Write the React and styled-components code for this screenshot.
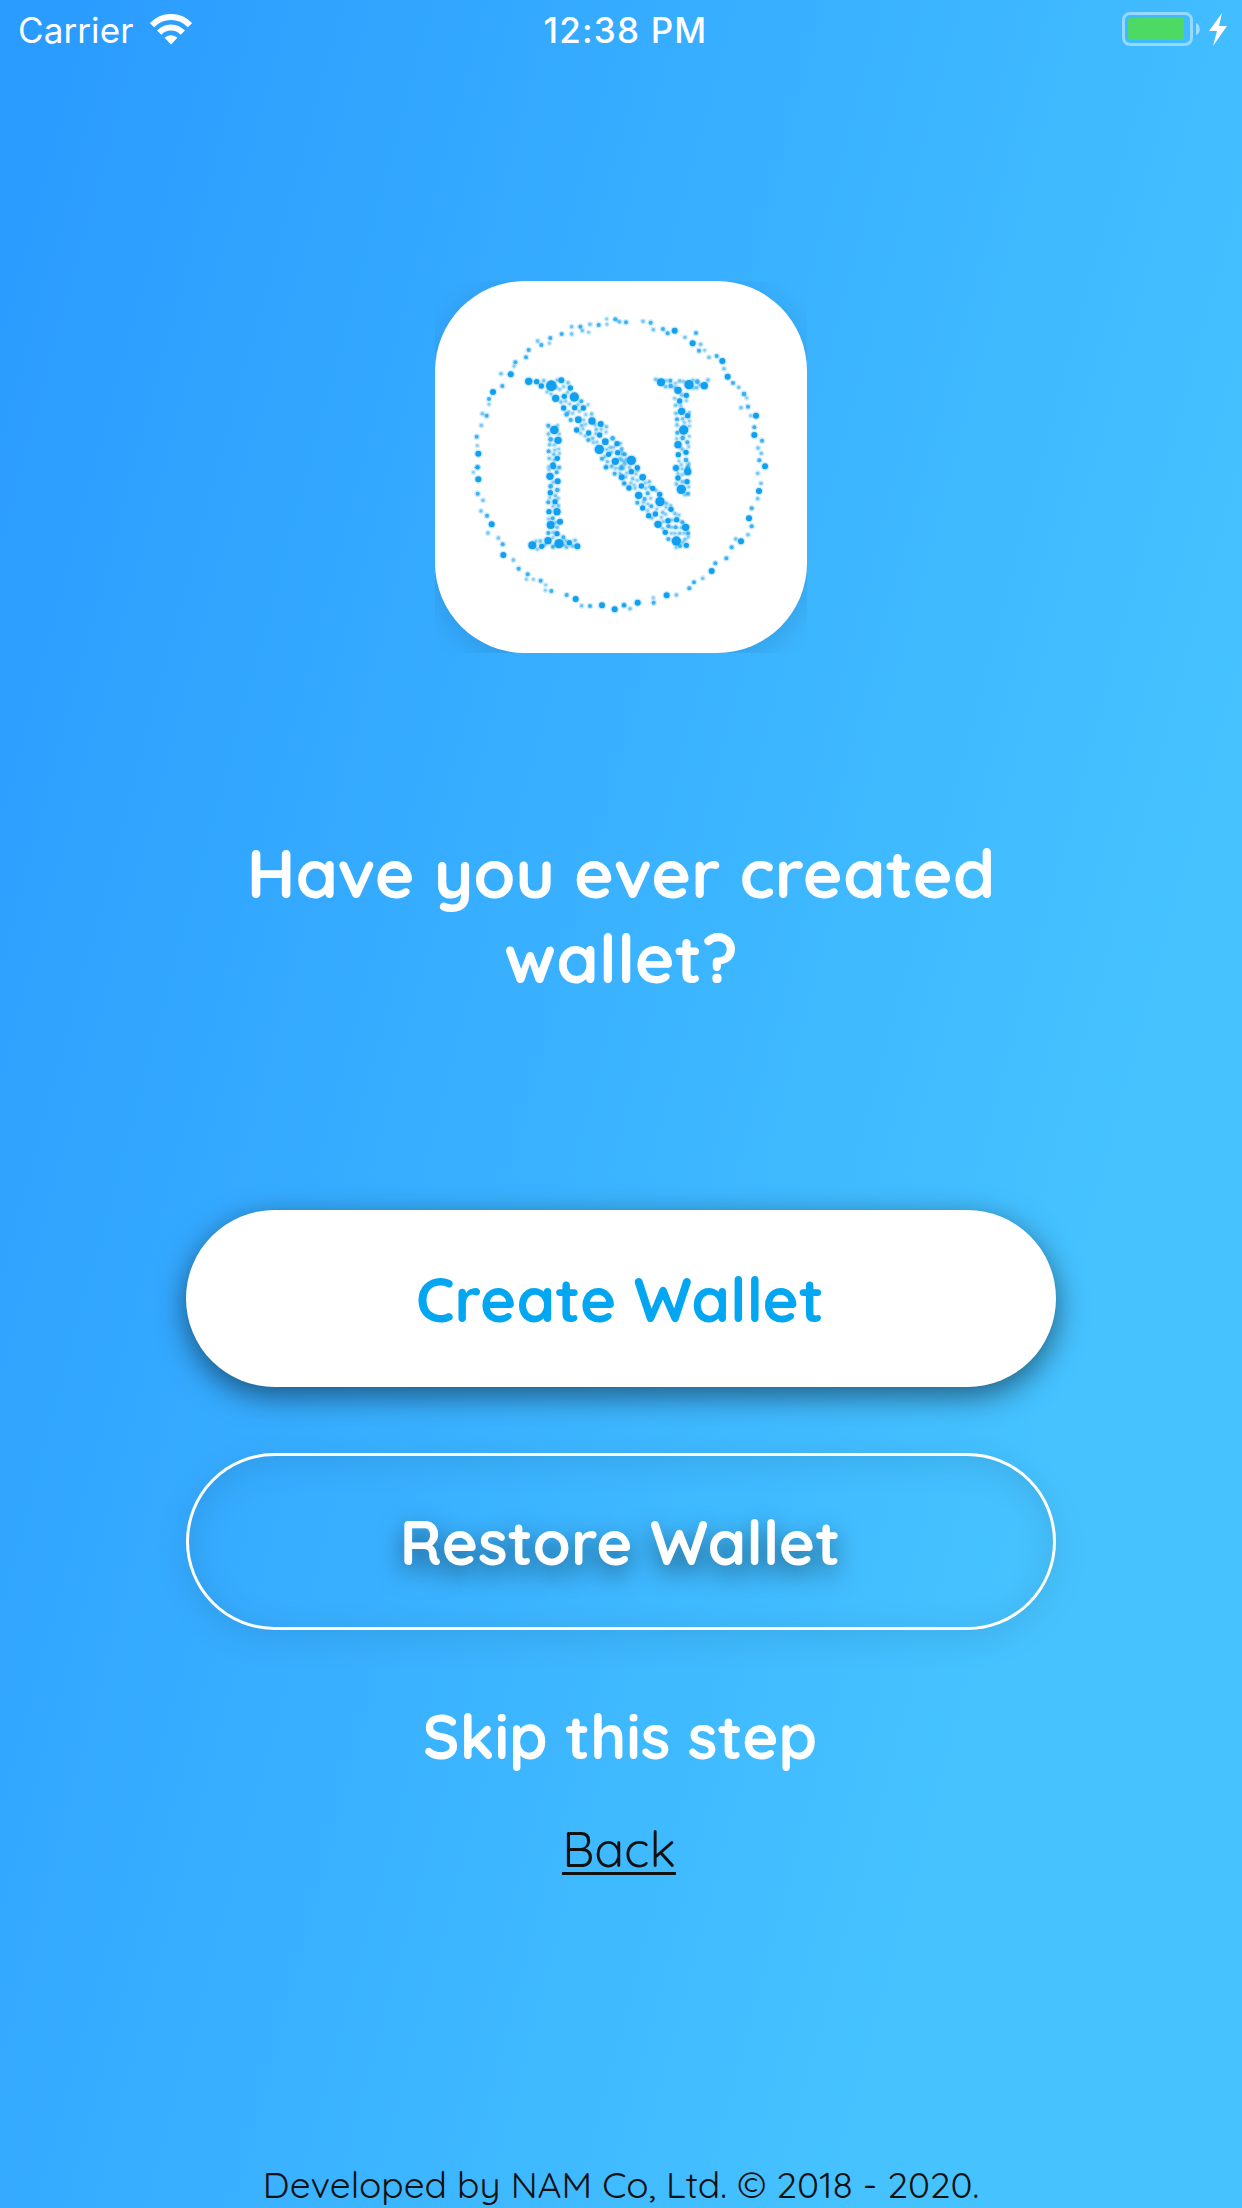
import React from 'react';
import styled, { createGlobalStyle } from 'styled-components';

const GlobalStyle = createGlobalStyle`
  * { box-sizing: border-box; }
  body { margin: 0; }
`;

const Screen = styled.main`
  width: 1242px;
  height: 2208px;
  overflow: hidden;
  display: flex;
  flex-direction: column;
  align-items: center;
  background: linear-gradient(105deg, #2a9bff 2%, #46c3ff 80%);
  font-family: Quicksand, Inter, 'Liberation Sans', sans-serif;
  color: #fff;
`;

const StatusBar = styled.header`
  width: 100%;
  height: 60px;
  padding: 0 15px 0 18px;
  display: grid;
  grid-template-columns: 1fr auto 1fr;
  align-items: center;
  font-family: Inter, 'Liberation Sans', sans-serif;
  font-size: 35px;
  line-height: 60px;
`;

const Network = styled.div`
  display: flex;
  align-items: center;
  gap: 17px;
`;

const Carrier = styled.span`
  font-weight: 400;
  letter-spacing: 0.1px;
`;

const Clock = styled.span`
  font-weight: 500;
  letter-spacing: 1.2px;
  padding-left: 6px;
`;

const Power = styled.div`
  display: flex;
  justify-content: flex-end;
`;

const LogoFrame = styled.div`
  width: 372px;
  height: 372px;
  margin-top: 221px;
  overflow: hidden;
  flex: none;
`;

const LogoCard = styled.div`
  width: 372px;
  height: 372px;
  border-radius: 90px;
  background: #fff;
  box-shadow: 0 6px 30px rgba(0, 0, 0, 0.12);
`;

const Heading = styled.h1`
  width: 800px;
  margin: 177px 0 0;
  font-size: 67.7px;
  line-height: 85px;
  font-weight: 700;
  text-align: center;
`;

const Actions = styled.section`
  margin-top: 210px;
  display: flex;
  flex-direction: column;
  gap: 66px;
`;

const Button = styled.button`
  width: 870px;
  height: 177px;
  padding: 0 2px 0 0;
  border: ${(p) => (p.$outlined ? '3px solid #fff' : '0')};
  border-radius: 89px;
  background: ${(p) => (p.$outlined ? 'transparent' : '#fff')};
  color: ${(p) => (p.$outlined ? '#fff' : '#03a6f0')};
  font: inherit;
  font-size: 61.6px;
  font-weight: 700;
  text-shadow: ${(p) => (p.$outlined ? '0 9px 24px rgba(0, 0, 0, 0.5)' : 'none')};
  box-shadow: ${(p) =>
    p.$outlined
      ? '0 9px 36px rgba(0, 0, 0, 0.09), inset 0 6px 36px rgba(0, 0, 0, 0.1)'
      : '0 9px 30px rgba(0, 0, 0, 0.5)'};
`;

const SkipButton = styled.button`
  margin-top: 64px;
  padding: 0 2px 0 0;
  border: 0;
  background: none;
  color: #fff;
  font: inherit;
  font-size: 61.6px;
  line-height: 84px;
  font-weight: 700;
`;

const BackLink = styled.a`
  margin: 42px 4px 0 0;
  height: 55px;
  border-bottom: 3px solid #111;
  color: #111;
  font-size: 49.2px;
  line-height: 58px;
  font-weight: 400;
`;

const Footer = styled.footer`
  margin-top: auto;
  height: 48px;
  color: #111;
  font-size: 37px;
  line-height: 48px;
  font-weight: 400;
  white-space: nowrap;
`;

const DOT_GROUPS = [
  {
    x: -30,
    y: -33,
    dots: `571,148,6 581,154,4 545,147,4 546,163,4 521,165,6 495,163,5 491,187,4 466,170,6 472,182,5 440,170,5 440,192,5 410,192,6 376,204,6 373,220,4 338,213,5 349,225,6 311,240,6 303,262,6 271,277,6 267,289,4 257,313,9 228,311,5 232,348,6 204,366,9 192,387,6 192,403,4 172,431,5 185,437,6 169,466,5 155,500,6 157,527,4 160,551,9 158,592,6
    311,334,11 335,335,8 349,348,8 356,332,5 379,347,16 409,331,9 429,338,5 436,354,8 392,385,11 418,379,8 448,381,14 416,414,8 449,413,8 469,394,6 475,414,8 408,396,5 425,433,7 437,450,6 460,449,10 501,453,11 482,434,4 500,432,5 527,462,9 544,470,5 455,480,8 470,466,5 491,489,8 524,495,8 541,515,10 563,505,7 576,521,8 490,510,6 523,538,14 551,553,8 578,548,8 592,552,5 571,574,11 531,566,6 547,575,5 543,592,6 503,505,5 514,478,5 556,532,5
    366,366,4 378,372,4 396,330,4 394,352,4 404,358,4 416,350,4 428,367,4 422,394,4 434,402,4 459,404,4 463,424,4 443,430,4 431,425,4 476,450,4 489,404,4 482,463,4 474,477,4 467,490,4 480,498,4 510,465,4 512,491,4 543,486,4 529,478,4 505,518,4 516,516,4 545,538,4 566,532,4 560,546,4 540,560,4 590,535,4 560,588,4 590,588,5 585,565,4 598,575,4
    388,480,13 370,467,6 370,492,5 377,508,7 399,511,11 374,524,5 371,544,6 389,540,4 401,537,4 397,565,8 373,565,5 384,585,8 402,592,5 371,590,4 398,466,4 403,492,4 388,525,4 386,553,5 403,550,4 387,570,4`,
  },
  {
    x: 555,
    y: -33,
    dots: `18,157,6 0,156,4 69,154,5 92,158,6 100,179,5 129,177,6 143,190,6 164,182,9 228,189,6 195,202,5 218,220,9 242,223,5 237,242,6 254,241,4 267,262,5 290,258,6 307,273,9 312,296,5 323,320,9 339,339,6 356,352,5 372,372,7 380,384,4 384,410,6 363,413,5 392,437,4 408,437,9 403,472,6 403,495,9 426,512,6 414,534,5 424,550,5 418,571,6 435,589,9
    123,337,12 107,328,5 137,350,5 152,348,7 151,332,6 179,333,5 174,361,11 207,344,14 232,335,7 230,353,5 253,347,11 264,330,5 199,376,8 179,393,8 164,385,4 199,392,4 167,406,5 185,424,11 203,437,8 171,448,6 168,430,5 191,480,14 171,465,5 172,488,6 208,453,4 208,499,4 188,504,7 202,517,6 174,524,11 198,547,8 175,554,8 177,573,4 198,570,7 168,594,8 203,595,7
    34,571,14 14,553,6 5,540,5 52,593,8 2,520,4 18,568,4 15,582,5 5,570,5 28,592,4 4,594,5
    138,332,4 167,340,4 190,334,4 220,354,4 240,345,4 219,330,4 164,352,4 185,375,5 182,407,4 208,427,4 188,446,5 193,458,4 208,468,4 170,506,4 186,537,5 206,530,4 184,584,4 207,581,4`,
  },
  {
    x: -30,
    y: 552,
    dots: `157,7,6 145,22,4 160,43,9 158,86,6 174,106,5 168,138,5 186,152,6 200,178,9 189,204,5 220,219,5 233,238,6 235,270,9 265,285,5 281,311,6 308,328,6 304,343,4 325,343,4 347,347,6 362,360,4 361,376,4 379,378,6 425,390,6 452,402,9 470,422,5 495,423,6 531,421,9 569,433,9 597,421,6
    375,34,11 398,49,9 395,22,6 385,5,8 377,64,7 397,75,7 376,83,8 390,110,8 370,112,6 400,100,4 372,140,8 396,140,11 383,160,6 405,170,9 377,180,12 396,187,5 370,204,6 396,206,8 415,217,6 369,227,11 402,236,14 322,241,12 350,244,8 346,228,5 333,228,4 337,253,4 384,245,6 433,233,8 425,247,5 450,226,5 457,244,9 442,243,5
    543,7,6 569,26,6 590,37,8 598,55,6 585,10,5 560,5,4 572,10,4 585,24,4
    372,14,4 403,8,4 384,52,4 374,98,4 391,92,5 384,124,4 400,122,5 370,162,4 392,172,4 384,202,4 384,218,4 422,227,4 360,240,4 418,240,4`,
  },
  {
    x: 555,
    y: 552,
    dots: `413,25,5 423,55,5 417,78,9 413,101,5 395,130,6 387,160,9 395,184,6 384,209,5 347,222,5 363,229,9 335,247,6 319,280,6 286,295,6 275,318,9 248,340,5 222,352,6 208,370,6 169,390,5 140,391,9 100,398,4 101,413,6 53,413,9 30,431,5 12,421,6
    168,9,8 203,20,11 204,2,5 174,39,8 201,50,8 169,57,5 184,73,14 204,86,6 187,50,5 186,12,4 187,29,4 174,25,4 206,66,4 194,90,4
    34,20,8 52,15,5 5,36,8 68,37,10 38,41,5 88,50,5 27,69,8 64,63,8 45,70,4 56,91,11 83,85,6 98,70,8 74,102,6 119,88,8 120,110,14 52,113,6 68,129,8 94,124,6 86,152,8 106,147,8 153,133,8 128,142,5 138,127,4 144,167,8 170,164,8 165,146,5 114,178,11 136,202,8 145,184,6 167,187,6 197,187,11 187,172,6 154,205,4 179,205,5 204,205,6 145,222,6 169,228,14 195,223,5 199,241,8 180,243,6 12,56,5
    10,10,5 20,24,4 18,36,4 48,27,4 52,46,4 32,54,4 76,54,4 43,60,4 77,70,4 88,65,4 108,76,4 92,100,4 70,112,4 83,117,4 83,137,4 110,132,4 96,160,4 124,157,4 137,148,4 139,115,5 152,121,4 177,150,4 156,165,4 130,170,4 128,190,4 155,187,4 183,188,4 165,205,4 192,205,4 205,216,4 188,232,4 168,248,4`,
  },
];

const parseDots = (text) => text.trim().split(/\s+/).map((d) => d.split(',').map(Number));

const Logo = () => (
  <svg width="372" height="372" viewBox="0 0 1116 1116" fill="#119ff0" aria-label="NAM">
    {DOT_GROUPS.map((group, g) => (
      <g key={g} transform={`translate(${group.x} ${group.y})`}>
        {parseDots(group.dots).map(([x, y, r], i) => (
          <React.Fragment key={i}>
            <circle cx={x} cy={y} r={r + 4} opacity={0.2} />
            <circle cx={x} cy={y} r={r} opacity={r < 5 ? 0.4 : r < 6 ? 0.5 : r < 8 ? 0.78 : 1} />
          </React.Fragment>
        ))}
      </g>
    ))}
  </svg>
);

const WifiIcon = () => (
  <svg width="42" height="33" viewBox="0 0 42 33" fill="none" stroke="#fff">
    <path d="M2 11.2C12.5 .2 29.5 .2 40 11.2" strokeWidth="6" />
    <path d="M9.2 18.6C15.8 11.8 26.2 11.8 32.8 18.6" strokeWidth="6" />
    <path d="M14.6 23.800C18.200 20.400 23.800 20.400 27.400 23.800L21 30.500Z" fill="#fff" stroke="none" />
  </svg>
);

const BatteryIcon = () => (
  <svg width="105" height="36" viewBox="0 1 105 36">
    <rect x="1.5" y="2.5" width="68" height="31" rx="6.5" fill="none" stroke="#fff" strokeOpacity=".45" strokeWidth="3" />
    <path d="M62 7v22H9a3 3 0 0 1-3-3V10a3 3 0 0 1 3-3Z" fill="#4cd964" />
    <path d="M74 12c5 1.500 5 11 0 12Z" fill="#fff" fillOpacity=".5" />
    <path d="M100 2 87 20h8l-4 15 14-20h-8Z" fill="#fff" />
  </svg>
);

export default function App() {
  return (
    <>
      <GlobalStyle />
      <Screen>
        <StatusBar>
          <Network>
            <Carrier>Carrier</Carrier>
            <WifiIcon />
          </Network>
          <Clock>12:38 PM</Clock>
          <Power>
            <BatteryIcon />
          </Power>
        </StatusBar>
        <LogoFrame>
          <LogoCard>
            <Logo />
          </LogoCard>
        </LogoFrame>
        <Heading>
          Have you ever created
          <br />
          wallet?
        </Heading>
        <Actions>
          <Button>Create Wallet</Button>
          <Button $outlined>Restore Wallet</Button>
        </Actions>
        <SkipButton>Skip this step</SkipButton>
        <BackLink>Back</BackLink>
        <Footer>Developed by NAM Co, Ltd. © 2018 - 2020.</Footer>
      </Screen>
    </>
  );
}
